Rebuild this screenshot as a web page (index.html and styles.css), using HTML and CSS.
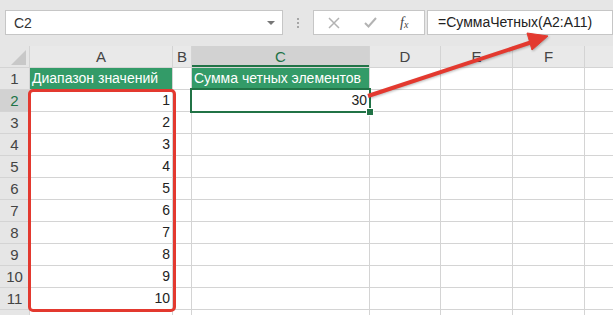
FILE: index.html
```html
<!DOCTYPE html>
<html lang="ru">
  <head>
    <meta charset="UTF-8" />
    <meta name="viewport" content="width=device-width, initial-scale=1.0" />
    <title>СуммаЧетных</title>
    <link rel="stylesheet" href="styles.css">
  </head>
  <body>
    <div class="formula-bar">
      <div class="name-box">
        <span>C2</span>
        <span class="caret"></span>
      </div>
      <div class="grip"><i></i><i></i><i></i></div>
      <div class="fx-buttons">
        <svg class="icon" width="12" height="12" viewBox="0 0 12 12">
          <path d="M1 1 L11 11 M11 1 L1 11" stroke="#b3b3b3" stroke-width="1.5" fill="none" />
        </svg>
        <svg class="icon" width="13" height="11" viewBox="0 0 13 11">
          <path d="M1 6 L4.5 9.5 L12 1" stroke="#b3b3b3" stroke-width="2" fill="none" />
        </svg>
        <span class="fx">f<sub>x</sub></span>
      </div>
      <div class="formula-input">=СуммаЧетных(A2:A11)</div>
    </div>

    <div class="sheet">
      <div class="hd corner"><span class="tri"></span></div>
      <div class="hd">A</div>
      <div class="hd">B</div>
      <div class="hd sel">C</div>
      <div class="hd">D</div>
      <div class="hd">E</div>
      <div class="hd">F</div>
      <div class="hd"></div>

      <div class="rh">1</div>
      <div class="c fill">Диапазон значений</div>
      <div class="c"></div>
      <div class="c fill">Сумма четных элементов</div>
      <div class="c"></div><div class="c"></div><div class="c"></div><div class="c"></div>

      <div class="rh sel">2</div>
      <div class="c num">1</div>
      <div class="c"></div>
      <div class="c num active">30</div>
      <div class="c"></div><div class="c"></div><div class="c"></div><div class="c"></div>

      <div class="rh">3</div>
      <div class="c num">2</div>
      <div class="c"></div><div class="c"></div><div class="c"></div><div class="c"></div><div class="c"></div><div class="c"></div>

      <div class="rh">4</div>
      <div class="c num">3</div>
      <div class="c"></div><div class="c"></div><div class="c"></div><div class="c"></div><div class="c"></div><div class="c"></div>

      <div class="rh">5</div>
      <div class="c num">4</div>
      <div class="c"></div><div class="c"></div><div class="c"></div><div class="c"></div><div class="c"></div><div class="c"></div>

      <div class="rh">6</div>
      <div class="c num">5</div>
      <div class="c"></div><div class="c"></div><div class="c"></div><div class="c"></div><div class="c"></div><div class="c"></div>

      <div class="rh">7</div>
      <div class="c num">6</div>
      <div class="c"></div><div class="c"></div><div class="c"></div><div class="c"></div><div class="c"></div><div class="c"></div>

      <div class="rh">8</div>
      <div class="c num">7</div>
      <div class="c"></div><div class="c"></div><div class="c"></div><div class="c"></div><div class="c"></div><div class="c"></div>

      <div class="rh">9</div>
      <div class="c num">8</div>
      <div class="c"></div><div class="c"></div><div class="c"></div><div class="c"></div><div class="c"></div><div class="c"></div>

      <div class="rh">10</div>
      <div class="c num">9</div>
      <div class="c"></div><div class="c"></div><div class="c"></div><div class="c"></div><div class="c"></div><div class="c"></div>

      <div class="rh">11</div>
      <div class="c num">10</div>
      <div class="c"></div><div class="c"></div><div class="c"></div><div class="c"></div><div class="c"></div><div class="c"></div>

      <!-- row 12 only peeks in at the bottom edge -->
      <div class="rh"></div>
      <div class="c"></div>
      <div class="c"></div><div class="c"></div><div class="c"></div><div class="c"></div><div class="c"></div><div class="c"></div>
    </div>

    <!-- annotation: range frame and arrow to the formula -->
    <div class="range-mark"></div>
    <svg class="arrow" width="613" height="315" viewBox="0 0 613 315">
      <g fill="#e3392f" stroke="#e3392f">
        <line x1="368" y1="96" x2="532" y2="42" stroke-width="4" />
        <polygon points="548,36 532,50 527,33" stroke-width="1" />
      </g>
    </svg>
  </body>
</html>
```

FILE: styles.css
```css
body {
  margin: 0;
  width: 613px;
  height: 315px;
  overflow: hidden;
  position: relative;
  background: #e6e6e6;
  font-family: "Liberation Sans", Arial, sans-serif;
  color: #222;
}

/* formula bar */
.formula-bar {
  display: flex;
  align-items: flex-start;
  height: 46px;
  padding-top: 10px;
  box-sizing: border-box;
}
.name-box {
  display: flex;
  align-items: center;
  justify-content: space-between;
  margin-left: 5px;
  width: 278px;
  height: 25px;
  box-sizing: border-box;
  padding: 0 7px 0 8px;
  background: #fff;
  border: 1px solid #c6c6c6;
  font-size: 14px;
  color: #333;
}
.caret {
  width: 0;
  height: 0;
  border-left: 4px solid transparent;
  border-right: 4px solid transparent;
  border-top: 4px solid #777;
  margin-top: 1px;
}
.grip {
  display: flex;
  flex-direction: column;
  gap: 2px;
  margin: 8px 14px 0 14px;
}
.grip i {
  display: block;
  width: 2px;
  height: 2px;
  background: #a6a6a6;
}
.fx-buttons {
  display: flex;
  align-items: center;
  width: 112px;
  height: 25px;
  box-sizing: border-box;
  padding-left: 14px;
  gap: 24px;
  background: #fff;
  border: 1px solid #c6c6c6;
}
.fx {
  font-family: "Liberation Serif", serif;
  font-style: italic;
  font-size: 14px;
  color: #444;
  margin-left: -1px;
}
.fx sub {
  font-size: 10px;
  vertical-align: -1px;
}
.formula-input {
  flex: 1;
  height: 25px;
  box-sizing: border-box;
  margin-left: 2px;
  padding: 3px 0 0 10px;
  background: #fff;
  border: 1px solid #c6c6c6;
  font-size: 14px;
  color: #222;
}

/* sheet grid */
.sheet {
  display: grid;
  grid-template-columns: 29px 142px 18px 177px 70px 71px 71px 1fr;
  grid-template-rows: repeat(13, 21px);
  gap: 1px;
  background: #d4d4d4;
}
.hd,
.rh {
  display: flex;
  align-items: center;
  justify-content: center;
  background: #e6e6e6;
  font-size: 15px;
  color: #444;
}
.hd {
  background: #e9e9e9;
}
.hd.sel,
.rh.sel {
  background: #d2d2d2;
  color: #217346;
}
.hd.sel {
  box-shadow: inset 0 -2px #217346;
}
.corner {
  position: relative;
  background: #e6e6e6;
}
.tri {
  position: absolute;
  right: 3px;
  bottom: 2px;
  width: 0;
  height: 0;
  border-left: 15px solid transparent;
  border-bottom: 15px solid #c8c8c8;
}
.c {
  background: #fff;
  font-size: 14px;
  line-height: 21px;
  padding: 0 2px;
  white-space: nowrap;
  overflow: hidden;
}
.num {
  text-align: right;
}
.fill {
  background: #339b68;
  color: #fff;
}
.active {
  position: relative;
  overflow: visible;
  outline: 2px solid #217346;
}
.active::after {
  content: "";
  position: absolute;
  right: -5px;
  bottom: -5px;
  width: 6px;
  height: 6px;
  background: #217346;
  border: 1px solid #fff;
}

/* annotation overlay */
.range-mark {
  position: absolute;
  left: 28px;
  top: 89px;
  width: 148px;
  height: 223px;
  box-sizing: border-box;
  border: 3px solid #e3392f;
  border-radius: 5px;
}
.arrow {
  position: absolute;
  left: 0;
  top: 0;
  filter: drop-shadow(1px 1px 1px rgba(0, 0, 0, 0.25));
}
```
